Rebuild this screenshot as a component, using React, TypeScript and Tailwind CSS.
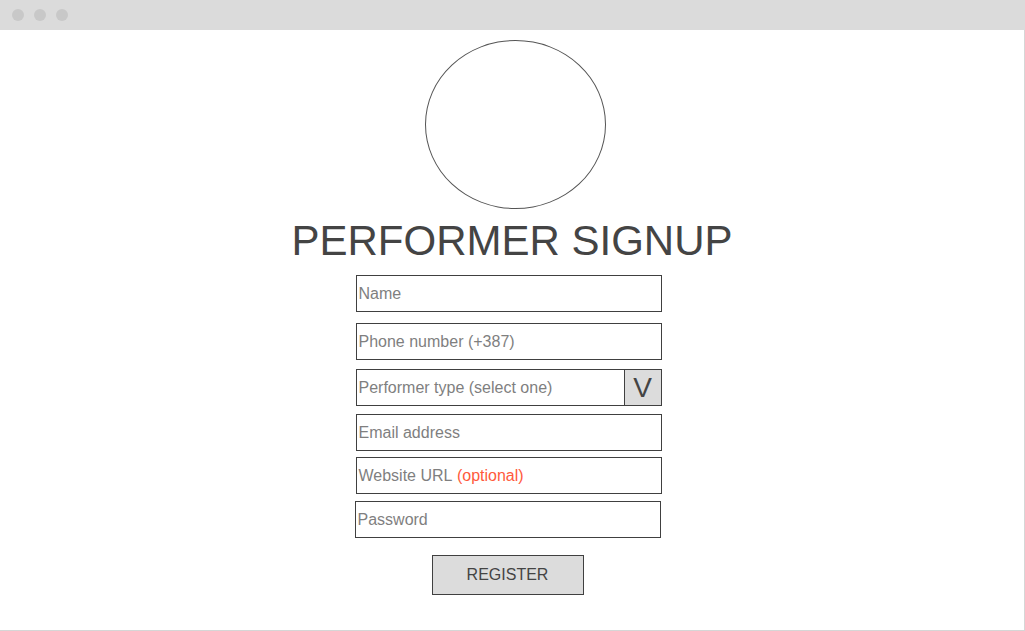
import { ReactNode } from 'react';

function Field({ children, className = '' }: { children: ReactNode; className?: string }) {
  return (
    <div className={`flex h-[37px] w-[306px] items-center border border-[#404040] bg-white pl-[2px] text-[16px] text-[#7f7f7f] ${className}`}>
      {children}
    </div>
  );
}

export default function App() {
  return (
    <div className="flex h-[631px] w-[1025px] flex-col overflow-hidden bg-white font-['Liberation_Sans',Arial,sans-serif]">
      {/* window bar */}
      <div className="flex h-[30px] shrink-0 items-center gap-[10px] bg-[#dbdbdb] pl-[12px]">
        <span className="h-[12px] w-[12px] rounded-full bg-[#c8c8c8]" />
        <span className="h-[12px] w-[12px] rounded-full bg-[#c8c8c8]" />
        <span className="h-[12px] w-[12px] rounded-full bg-[#c8c8c8]" />
      </div>

      <div className="flex flex-1 flex-col items-center border-r border-b border-[#d6d6d6] pt-[10px]">
        <div className="ml-[6px] h-[169px] w-[181px] rounded-[50%] border border-[#555]" />

        <h1 className="mt-[8px] text-[42px] leading-[48px] font-normal text-[#444]">PERFORMER SIGNUP</h1>

        <div className="mt-[10px] mr-[7px] flex flex-col">
          <Field>Name</Field>
          <Field className="mt-[11px]">Phone number (+387)</Field>
          <Field className="mt-[9px] pr-0">
            <span className="flex-1">Performer type (select one)</span>
            <span className="flex h-full w-[37px] items-center justify-center border-l border-[#404040] bg-[#dcdcdc] text-[28px] text-[#444]">V</span>
          </Field>
          <Field className="mt-[8px]">Email address</Field>
          <Field className="mt-[6px]">
            Website URL&nbsp;<span className="text-[#ff5a3c]">(optional)</span>
          </Field>
          <Field className="mt-[7px] -ml-[1px]">Password</Field>
          <button className="mt-[17px] ml-[76px] h-[40px] w-[152px] border border-[#404040] bg-[#dcdcdc] text-[16px] text-[#444]">
            REGISTER
          </button>
        </div>
      </div>
    </div>
  );
}
